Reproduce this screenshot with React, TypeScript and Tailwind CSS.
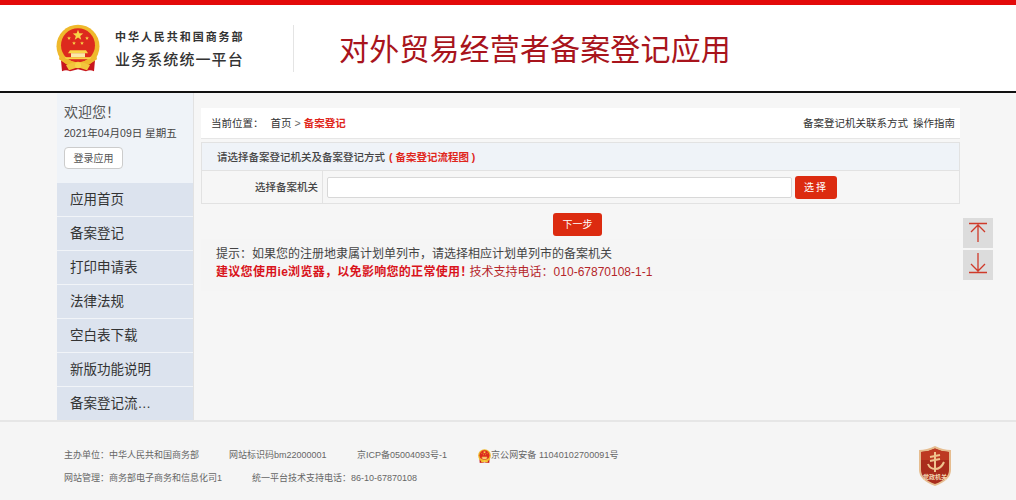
const menu = ['应用首页', '备案登记', '打印申请表', '法律法规', '空白表下载', '新版功能说明', '备案登记流…'];

function Star({ x, y, r }: { x: number; y: number; r: number }) {
  const pts = Array.from({ length: 10 }, (_, i) => {
    const a = -Math.PI / 2 + (i * Math.PI) / 5;
    const d = i % 2 ? r * 0.42 : r;
    return `${x + d * Math.cos(a)},${y + d * Math.sin(a)}`;
  }).join(' ');
  return <polygon points={pts} fill="#f8d648" />;
}

function Emblem({ size }: { size: number }) {
  return (
    <svg width={size} height={size * 1.1} viewBox="0 0 44 48">
      <path d="M5 36h34l-1 11q-4-2-8 0l-8-2-8 2q-4-2-8 0z" fill="#c8161d" />
      <circle cx="22" cy="22" r="21.5" fill="#efb92c" />
      <circle cx="22" cy="21" r="17" fill="#dd2a1e" />
      <Star x={22} y={11} r={5.5} />
      <Star x={13} y={14} r={2} />
      <Star x={31} y={14} r={2} />
      <Star x={18} y={19} r={2} />
      <Star x={26} y={19} r={2} />
      <path d="M14 26h16l2 3H12z" fill="#f8d648" />
      <rect x="15" y="29" width="14" height="4" fill="#fbe9a8" />
      <rect x="9" y="33" width="26" height="2" fill="#f8d648" />
      <path d="M4 30q18 16 36 0l1 5q-19 14-38 0z" fill="#efb92c" />
      <path d="M10 41q12-7 24 0l-3 5-9-3-9 3z" fill="#f3c53c" />
      <circle cx="22" cy="41" r="3" fill="#f8d648" />
    </svg>
  );
}

function Badge() {
  return (
    <svg width="34" height="42" viewBox="0 0 34 42">
      <path d="M1 5q8 0 16-4 8 4 16 4v20q0 10-16 16Q1 35 1 25z" fill="#e6bd90" />
      <path d="M3 7q7 0 14-3.500 7 3.500 14 3.500v18q0 9-14 14Q3 34 3 25z" fill="#a92c1c" />
      <path d="M3 7q7 0 14-3.500 7 3.500 14 3.500v8H3z" fill="#bd3a22" />
      <path d="M17 7v20M12 12l10-2M12 16l10-2" stroke="#efc48e" strokeWidth="2" fill="none" />
      <path d="M10 19q2 5 7 5 6 0 9-7" stroke="#efc48e" strokeWidth="2" fill="none" />
      <text x="17" y="34" textAnchor="middle" fontSize="6" fontWeight="700" fill="#f3d7b2">党政机关</text>
    </svg>
  );
}

export default function App() {
  return (
    <div className="relative w-[1016px] h-[500px] overflow-hidden bg-[#f6f6f6] text-[#333] font-['Liberation_Sans','Noto_Sans_CJK_SC',sans-serif]">
      <header className="h-[93px] bg-white border-t-[5px] border-t-[#e30a0a] border-b-2 border-b-[#111] flex items-center pl-[56px]">
        <Emblem size={44} />
        <div className="ml-[15px] w-[134px] pt-[3px]">
          <div className="text-[11px] leading-[14px] font-bold tracking-[1.95px] text-[#333] whitespace-nowrap">中华人民共和国商务部</div>
          <div className="mt-[6px] text-[15px] leading-[20px] font-medium tracking-[1.1px] text-[#333] whitespace-nowrap">业务系统统一平台</div>
        </div>
        <div className="ml-[44px] w-px h-[47px] bg-[#e4e4e4]" />
        <h1 className="ml-[45px] mt-[3px] text-[30px] leading-[40px] tracking-[0.15px] text-[#a8141c] whitespace-nowrap">对外贸易经营者备案登记应用</h1>
      </header>

      <div className="flex h-[327px] pl-[57px]">
        <aside className="w-[137px] bg-[#eff3f8] border-r border-[#e2e2e2] flex flex-col">
          <div className="h-[90px] pl-[7px] pt-[9px]">
            <div className="text-[14px] leading-[20px] text-[#555]">欢迎您！</div>
            <div className="mt-[3px] text-[10.500px] leading-[16px] text-[#444] whitespace-nowrap">2021年04月09日 星期五</div>
            <button className="mt-[6px] w-[59px] h-[22px] bg-white border border-[#ccc] rounded-[4px] text-[10px] text-[#555]">登录应用</button>
          </div>
          {menu.map((m) => (
            <div key={m} className="h-[34px] shrink-0 bg-[#dce3ee] border-b border-b-[#f1f4f8] pl-[13px] text-[13.500px] leading-[34px] text-[#333] last:border-b-0 last:h-[33px]">{m}</div>
          ))}
        </aside>

        <main className="ml-[7px] w-[759px] pt-[15px]">
          <div className="h-[31px] bg-white border-b border-[#e6e6e6] flex items-center justify-between pl-[10px] pr-[5px] pt-[1px] text-[10.500px] text-[#333]">
            <div className="flex items-center">
              <span>当前位置：</span>
              <span className="ml-[7px]">首页</span>
              <span className="mx-[3px] text-[#666]">&gt;</span>
              <span className="font-bold text-[#e0261c]">备案登记</span>
            </div>
            <div className="flex gap-[5px]">
              <span>备案登记机关联系方式</span>
              <span>操作指南</span>
            </div>
          </div>

          <div className="mt-[3px] border border-[#e2e2e2]">
            <div className="h-[28px] bg-[#eff3f8] border-b border-[#e2e2e2] pl-[15px] text-[10.500px] leading-[29px] font-medium text-[#444]">
              请选择备案登记机关及备案登记方式
              <span className="ml-[4px] font-bold text-[#e0261c]">( 备案登记流程图 )</span>
            </div>
            <div className="h-[32px] flex items-center">
              <div className="w-[121px] h-full border-r border-[#e2e2e2] pr-[4px] text-right text-[10.500px] leading-[33px] font-medium text-[#444]">选择备案机关</div>
              <input className="ml-[4px] w-[465px] h-[21px] bg-white border border-[#d8d8d8] rounded-[2px]" />
              <button className="ml-[3px] w-[42px] h-[23px] rounded-[3px] bg-[#dc2b10] text-white text-[10px] tracking-[2px]">选择</button>
            </div>
          </div>

          <div className="mt-[7px] pl-[352px]">
            <button className="w-[49px] h-[23px] rounded-[3px] bg-[#dc2b10] text-white text-[10px]">下一步</button>
          </div>

          <div className="mt-[3px] h-[52px] bg-[#f5f5f5] pl-[15px] pt-[6px] text-[12px] leading-[18px]">
            <div className="text-[#444]">提示：如果您的注册地隶属计划单列市，请选择相应计划单列市的备案机关</div>
            <div className="text-[#b5262a]">
              <span className="font-bold tracking-[0.3px] text-[#d9141c]">建议您使用ie浏览器，以免影响您的正常使用！</span>
              <span className="ml-[-3px]">技术支持电话：010-67870108-1-1</span>
            </div>
          </div>
        </main>
      </div>

      <div className="absolute left-[963px] top-[218px] flex flex-col gap-[2px]">
        <div className="w-[30px] h-[30px] bg-[#dcdcdc]">
          <svg width="30" height="30" viewBox="0 0 30 30" fill="none" stroke="#cf3a2a" strokeWidth="1.300">
            <path d="M6 5.500h18M15 24V7M8 14l7-7 7 7" />
          </svg>
        </div>
        <div className="w-[30px] h-[30px] bg-[#dcdcdc]">
          <svg width="30" height="30" viewBox="0 0 30 30" fill="none" stroke="#cf3a2a" strokeWidth="1.300">
            <path d="M6 22.500h18M15 3v18M8 14l7 7 7-7" />
          </svg>
        </div>
      </div>

      <footer className="h-[80px] border-t-2 border-[#e6e6e6] bg-[#f5f5f5] pl-[64px] pr-[64px] pt-[10px] flex items-center justify-between text-[9px] text-[#666]">
        <div className="flex flex-col gap-[12px] pt-[3px]">
          <div className="flex items-center h-[11px] whitespace-nowrap">
            <span className="w-[165px]">主办单位：中华人民共和国商务部</span>
            <span className="w-[128px]">网站标识码bm22000001</span>
            <span className="w-[121px]">京ICP备05004093号-1</span>
            <Emblem size={13} />
            <span className="tracking-[0.08px]">京公网安备 11040102700091号</span>
          </div>
          <div className="flex items-center h-[11px] whitespace-nowrap">
            <span className="w-[188px]">网站管理：商务部电子商务和信息化司1</span>
            <span>统一平台技术支持电话：86-10-67870108</span>
          </div>
        </div>
        <Badge />
      </footer>
    </div>
  );
}
